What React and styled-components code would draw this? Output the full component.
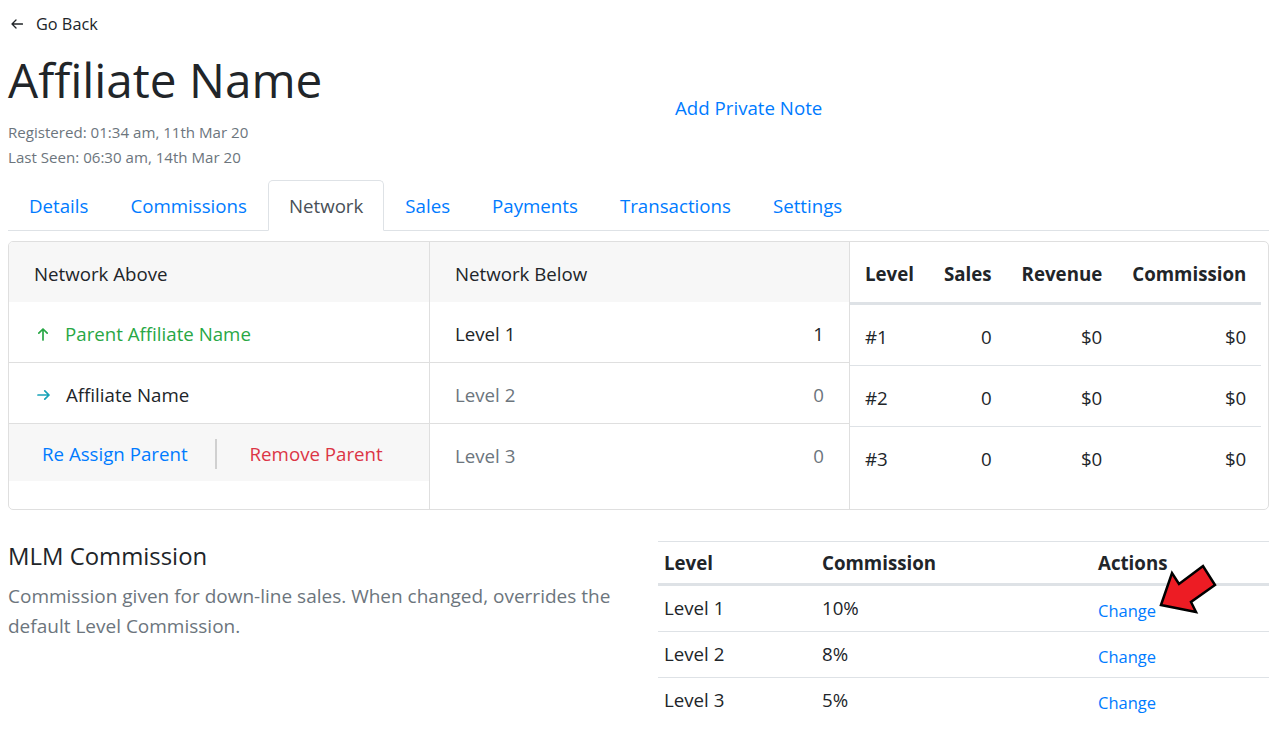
import React from "react";
import styled, { createGlobalStyle } from "styled-components";

const FONT = `"Open Sans", "Noto Sans", "Liberation Sans", sans-serif`;

const GlobalStyle = createGlobalStyle`
  html, body { margin: 0; padding: 0; background: #fff; }
  body {
    font-family: ${FONT};
    color: #212529;
    font-size: 18.7px;
    line-height: 30px;
  }
  * { box-sizing: border-box; }
`;

const Page = styled.div`
  padding: 0 8px 24px;
`;

const BackLink = styled.a`
  display: inline-flex;
  align-items: center;
  gap: 13px;
  margin-top: 11px;
  padding-left: 3px;
  font-size: 16.3px;
  line-height: 26px;
  color: #212529;
  text-decoration: none;
`;

const HeaderRow = styled.div`
  display: grid;
  grid-template-columns: 667px 1fr;
  align-items: center;
`;

const NoteCell = styled.div`
  padding-top: 8px;
`;

const Title = styled.h1`
  margin: 12px 0 10px;
  font-size: 47.7px;
  line-height: 60px;
  font-weight: 400;
  color: #212529;
`;

const Meta = styled.div`
  font-size: 15.1px;
  line-height: 25px;
  color: #6c757d;
`;

const Link = styled.a`
  color: ${(p) => p.$color || "#007bff"};
  text-decoration: none;
  cursor: pointer;
`;

const Nav = styled.nav`
  display: flex;
  margin-top: 10px;
  border-bottom: 1px solid #dee2e6;
`;

const Tab = styled.a`
  display: block;
  padding: 10px 20px 9px;
  margin-bottom: -1px;
  font-size: 18.7px;
  line-height: 30px;
  border: 1px solid transparent;
  border-top-left-radius: 5px;
  border-top-right-radius: 5px;
  color: ${(p) => (p.$active ? "#495057" : "#007bff")};
  background: ${(p) => (p.$active ? "#fff" : "transparent")};
  border-color: ${(p) => (p.$active ? "#dee2e6 #dee2e6 #fff" : "transparent")};
  text-decoration: none;
  cursor: pointer;
`;

const Card = styled.div`
  margin-top: 10px;
  border: 1px solid #dfdfdf;
  border-radius: 5px;
  min-height: 269px;
  display: grid;
  grid-template-columns: 421px 420px 1fr;
  overflow: hidden;
`;

const Column = styled.div`
  border-right: ${(p) => (p.$last ? "none" : "1px solid #dfdfdf")};
  display: flex;
  flex-direction: column;
`;

const PanelHeader = styled.div`
  background: #f7f7f7;
  padding: 17px 25px 13px;
  line-height: 30px;
`;

const ListRow = styled.div`
  display: flex;
  align-items: center;
  justify-content: space-between;
  padding: 17px 25px 13px;
  line-height: 30px;
  color: ${(p) => p.$color || "#212529"};
  border-bottom: ${(p) => (p.$noBorder ? "none" : "1px solid #dfdfdf")};
`;

const Label = styled.span`
  display: inline-flex;
  align-items: center;
`;

const IconBox = styled.span`
  display: inline-flex;
  margin: 0 16px 0 3px;
  color: ${(p) => p.$color};
`;

const ActionBar = styled.div`
  display: flex;
  align-items: center;
  height: 57px;
  padding: 3px 0 0 33px;
  background: #f7f7f7;
`;

const TextButton = styled.button`
  background: none;
  border: 0;
  padding: 0;
  font: inherit;
  line-height: 30px;
  color: ${(p) => p.$color};
  cursor: pointer;
`;

const Divider = styled.span`
  width: 2px;
  height: 30px;
  background: #d0d0d0;
  margin: 0 33px 0 27px;
`;

const StatsTable = styled.table`
  width: 410px;
  border-collapse: collapse;
`;

const StatTh = styled.th`
  padding: 17px 15px 13px;
  line-height: 30px;
  font-weight: 700;
  text-align: ${(p) => p.$align || "left"};
  border-bottom: 3px solid #dee2e6;
  width: ${(p) => p.$w}px;
`;

const StatTd = styled.td`
  padding: 17px 15px 13px;
  line-height: 30px;
  text-align: ${(p) => p.$align || "left"};
  border-bottom: 1px solid #dee2e6;
  tr:last-child > & { border-bottom: none; }
`;

const Bottom = styled.div`
  display: grid;
  grid-template-columns: 635px 611px;
  column-gap: 15px;
  margin-top: 31px;
  align-items: start;
`;

const SectionTitle = styled.h5`
  margin: 0 0 10px;
  font-size: 23.9px;
  line-height: 30px;
  font-weight: 400;
  color: #212529;
`;

const Description = styled.p`
  margin: 0;
  font-size: 19px;
  color: #6c757d;
  line-height: 30px;
`;

const CommWrap = styled.div`
  position: relative;
`;

const CommTable = styled.table`
  width: 100%;
  border-collapse: collapse;
`;

const CommTh = styled.th`
  padding: 6px 6px 5px;
  line-height: 30px;
  text-align: left;
  font-weight: 700;
  border-top: 1px solid #dee2e6;
  border-bottom: 3px solid #dee2e6;
  width: ${(p) => p.$w}px;
`;

const CommTd = styled.td`
  padding: 7px 6px 8px;
  line-height: 30px;
  vertical-align: top;
  border-bottom: 1px solid #dee2e6;
  tr:last-child > & { border-bottom: none; }
`;

const ChangeLink = styled.a`
  display: block;
  margin-top: 6px;
  font-size: 16.5px;
  line-height: 24px;
  color: #007bff;
  text-decoration: none;
  cursor: pointer;
`;

const Pointer = styled.svg`
  position: absolute;
  left: 500px;
  top: 22px;
  overflow: visible;
`;

const ArrowLeft = () => (
  <svg width="12" height="12" viewBox="0 0 12 12" fill="none" stroke="currentColor" strokeWidth="1.3" strokeLinecap="round" strokeLinejoin="round">
    <path d="M11.5 6H1M5 2L1 6l4 4" />
  </svg>
);

const ArrowUp = () => (
  <svg width="12" height="14" viewBox="0 0 12 14" fill="none" stroke="currentColor" strokeWidth="1.7" strokeLinecap="round" strokeLinejoin="round">
    <path d="M6 13V2M1.8 6.2L6 2l4.2 4.2" />
  </svg>
);

const ArrowRight = () => (
  <svg width="13" height="12" viewBox="0 0 13 12" fill="none" stroke="currentColor" strokeWidth="1.7" strokeLinecap="round" strokeLinejoin="round">
    <path d="M1 6h11M7.8 1.8L12 6l-4.2 4.2" />
  </svg>
);

const tabs = ["Details", "Commissions", "Network", "Sales", "Payments", "Transactions", "Settings"];

const below = [
  { label: "Level 1", count: 1, color: "#212529" },
  { label: "Level 2", count: 0, color: "#6c757d" },
  { label: "Level 3", count: 0, color: "#6c757d" },
];

const stats = [
  { level: "#1", sales: 0, revenue: "$0", commission: "$0" },
  { level: "#2", sales: 0, revenue: "$0", commission: "$0" },
  { level: "#3", sales: 0, revenue: "$0", commission: "$0" },
];

const mlm = [
  { level: "Level 1", commission: "10%" },
  { level: "Level 2", commission: "8%" },
  { level: "Level 3", commission: "5%" },
];

export default function App() {
  return (
    <>
      <GlobalStyle />
      <Page>
        <BackLink href="#">
          <ArrowLeft />
          Go Back
        </BackLink>

        <HeaderRow>
          <div>
            <Title>Affiliate Name</Title>
            <Meta>
              <div>Registered: 01:34 am, 11th Mar 20</div>
              <div>Last Seen: 06:30 am, 14th Mar 20</div>
            </Meta>
          </div>
          <NoteCell>
            <Link href="#">Add Private Note</Link>
          </NoteCell>
        </HeaderRow>

        <Nav>
          {tabs.map((t) => (
            <Tab key={t} $active={t === "Network"} href="#">
              {t}
            </Tab>
          ))}
        </Nav>

        <Card>
          <Column>
            <PanelHeader>Network Above</PanelHeader>
            <ListRow $color="#28a745">
              <Label>
                <IconBox $color="#28a745">
                  <ArrowUp />
                </IconBox>
                Parent Affiliate Name
              </Label>
            </ListRow>
            <ListRow>
              <Label>
                <IconBox $color="#17a2b8">
                  <ArrowRight />
                </IconBox>
                Affiliate Name
              </Label>
            </ListRow>
            <ActionBar>
              <TextButton $color="#007bff">Re Assign Parent</TextButton>
              <Divider />
              <TextButton $color="#dc3545">Remove Parent</TextButton>
            </ActionBar>
          </Column>

          <Column>
            <PanelHeader>Network Below</PanelHeader>
            {below.map((r, i) => (
              <ListRow key={r.label} $color={r.color} $noBorder={i === below.length - 1}>
                <span>{r.label}</span>
                <span>{r.count}</span>
              </ListRow>
            ))}
          </Column>

          <Column $last>
            <StatsTable>
              <thead>
                <tr>
                  <StatTh $w={78}>Level</StatTh>
                  <StatTh $w={77} $align="right">Sales</StatTh>
                  <StatTh $w={110} $align="right">Revenue</StatTh>
                  <StatTh $w={145} $align="right">Commission</StatTh>
                </tr>
              </thead>
              <tbody>
                {stats.map((s) => (
                  <tr key={s.level}>
                    <StatTd>{s.level}</StatTd>
                    <StatTd $align="right">{s.sales}</StatTd>
                    <StatTd $align="right">{s.revenue}</StatTd>
                    <StatTd $align="right">{s.commission}</StatTd>
                  </tr>
                ))}
              </tbody>
            </StatsTable>
          </Column>
        </Card>

        <Bottom>
          <div>
            <SectionTitle>MLM Commission</SectionTitle>
            <Description>
              Commission given for down-line sales. When changed, overrides the default Level Commission.
            </Description>
          </div>
          <CommWrap>
            <CommTable>
              <thead>
                <tr>
                  <CommTh $w={158}>Level</CommTh>
                  <CommTh $w={276}>Commission</CommTh>
                  <CommTh $w={177}>Actions</CommTh>
                </tr>
              </thead>
              <tbody>
                {mlm.map((m) => (
                  <tr key={m.level}>
                    <CommTd>{m.level}</CommTd>
                    <CommTd>{m.commission}</CommTd>
                    <CommTd>
                      <ChangeLink href="#">Change</ChangeLink>
                    </CommTd>
                  </tr>
                ))}
              </tbody>
            </CommTable>
            <Pointer width="62" height="54" viewBox="0 0 62 54">
              <polygon
                points="3,42 14,10 21,21 45,3 57,22 33,39 38,49"
                fill="#ed1c24"
                stroke="#000"
                strokeWidth="2.5"
                strokeLinejoin="miter"
              />
            </Pointer>
          </CommWrap>
        </Bottom>
      </Page>
    </>
  );
}
